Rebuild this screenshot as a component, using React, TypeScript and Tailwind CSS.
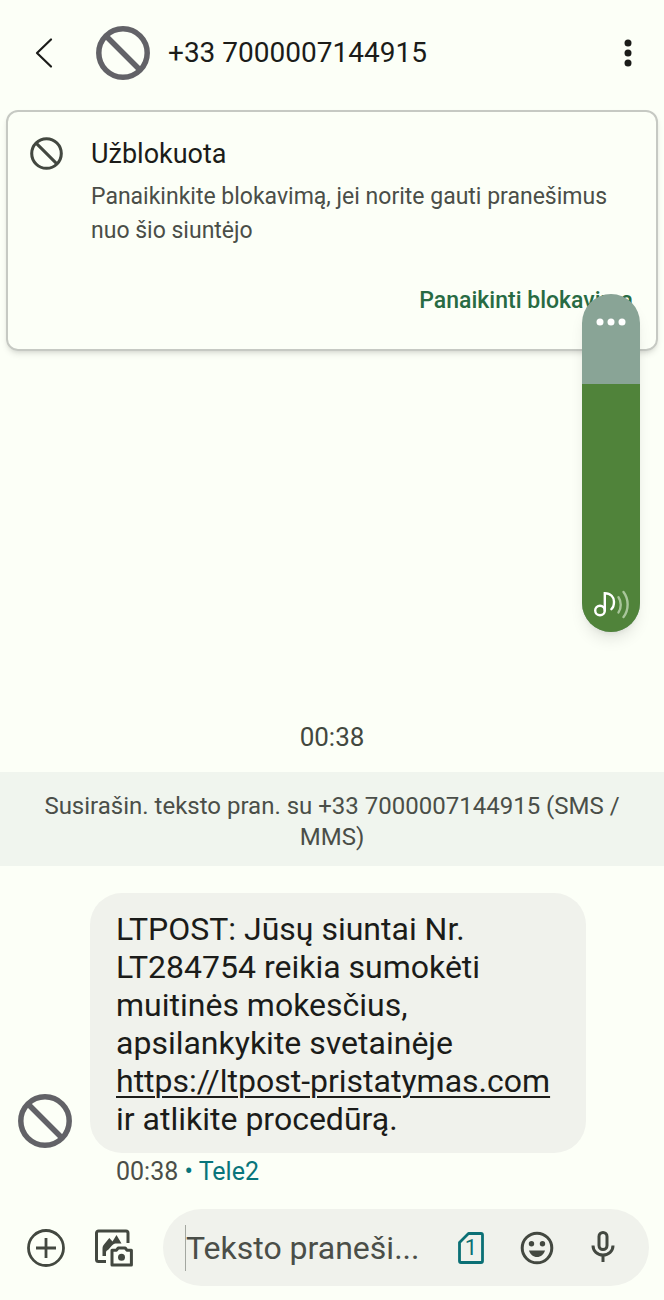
import { useState } from "react";

interface IMessage {
  lines: string[];
  link: string;
  ending: string;
  time: string;
  carrier: string;
}

const PHONE = "+33 7000007144915";

const message: IMessage = {
  lines: ["LTPOST: Jūsų siuntai Nr.", "LT284754 reikia sumokėti", "muitinės mokesčius,", "apsilankykite svetainėje"],
  link: "https://ltpost-pristatymas.com",
  ending: "ir atlikite procedūrą.",
  time: "00:38",
  carrier: "Tele2",
};

function BlockedIcon({ className, strokeWidth }: { className: string; strokeWidth: number }) {
  return (
    <svg viewBox="0 0 54 54" fill="none" stroke="currentColor" strokeWidth={strokeWidth} className={className} aria-hidden="true">
      <circle cx="27" cy="27" r="24.2" />
      <path d="M10 10l34 34" />
    </svg>
  );
}

function Header() {
  return (
    <header className="flex h-[105px] items-center pl-3 pr-1">
      <button aria-label="Atgal" className="flex size-16 items-center justify-center">
        <svg viewBox="0 0 18 32" fill="none" stroke="currentColor" strokeWidth="2.2" strokeLinecap="round" strokeLinejoin="round" className="h-8 w-[18px]">
          <path d="M16 2.5L2 16l14 13.5" />
        </svg>
      </button>
      <BlockedIcon className="ml-5 size-[54px] shrink-0 text-[#626267]" strokeWidth={5.5} />
      <h1 className="ml-[18px] flex-1 text-[28px] leading-9">{PHONE}</h1>
      <button aria-label="Daugiau parinkčių" className="flex size-16 items-center justify-center">
        <svg viewBox="0 0 8 28" fill="currentColor" className="h-7 w-2">
          <circle cx="4" cy="4" r="3.5" />
          <circle cx="4" cy="14" r="3.5" />
          <circle cx="4" cy="24" r="3.5" />
        </svg>
      </button>
    </header>
  );
}

function BlockedCard() {
  return (
    <section className="mx-[6px] mt-[5px] flex gap-7 rounded-xl border-2 border-[#c6c9c3] pb-[31px] pl-[22px] pr-[23px] pt-6 shadow-md">
      <BlockedIcon className="mt-[1px] size-[33px] shrink-0 text-[#434840]" strokeWidth={5} />
      <div className="flex flex-1 flex-col">
        <h2 className="text-[27px] leading-9">Užblokuota</h2>
        <p className="mt-2 text-[23px] leading-[34px] text-[#4a4e48]">
          Panaikinkite blokavimą, jei norite gauti pranešimus nuo šio siuntėjo
        </p>
        <button className="mt-9 self-end text-[23px] font-medium leading-[34px] text-[#286b43]">Panaikinti blokavimą</button>
      </div>
    </section>
  );
}

function VolumePanel() {
  const [volume, setVolume] = useState(73);

  return (
    <div className="absolute right-6 top-[294px] flex h-[338px] w-[58px] flex-col justify-end overflow-hidden rounded-full bg-[#89a496] shadow-lg">
      <div className="bg-[#50833a]" style={{ height: `${volume + 0.4}%` }} />
      <input
        type="range"
        aria-label="Garsumas"
        value={volume}
        onChange={(e) => setVolume(Number(e.target.value))}
        className="absolute inset-0 h-full w-full opacity-0 [direction:rtl] [writing-mode:vertical-lr]"
      />
      <button aria-label="Garso nustatymai" className="absolute left-0 top-0 flex h-14 w-full items-center justify-center">
        <svg viewBox="0 0 30 8" fill="white" className="h-2 w-[30px]">
          <circle cx="4" cy="4" r="3.5" />
          <circle cx="15" cy="4" r="3.5" />
          <circle cx="26" cy="4" r="3.5" />
        </svg>
      </button>
      <svg viewBox="0 0 36 30" fill="none" strokeWidth="2.4" strokeLinecap="round" className="pointer-events-none absolute bottom-3 left-3 h-[30px] w-9">
        <g stroke="white">
          <circle cx="6" cy="20.5" r="4.8" />
          <path d="M10.8 20.5V3.2c6 0 9.2 4 9.2 8.6 0 3.4-1 6-2.6 7.4" />
        </g>
        <path d="M24.5 7.2c3 4.2 3 11 0 15.2" stroke="#a9c69b" />
        <path d="M29.500 2c5.500 7 5.500 18 0 25" stroke="#a9c69b" />
      </svg>
    </div>
  );
}

function Bubble() {
  return (
    <div className="mt-[27px] flex items-end gap-[18px] pl-[18px]">
      <BlockedIcon className="mb-[39px] size-[54px] shrink-0 text-[#626267]" strokeWidth={5.5} />
      <div>
        <p className="rounded-[32px] bg-[#f0f2ec] pb-[15px] pl-[26px] pr-9 pt-[17px] text-[32px] leading-[38px]">
          {message.lines.map((line) => (
            <span key={line} className="block">{line}</span>
          ))}
          <a href={message.link} className="block underline decoration-2 underline-offset-4">{message.link}</a>
          <span className="block">{message.ending}</span>
        </p>
        <p className="mt-1 pl-[26px] text-[25px] leading-[30px] text-[#4a4e48]">
          {message.time} <span className="text-[#08757b]">• {message.carrier}</span>
        </p>
      </div>
    </div>
  );
}

function Composer() {
  return (
    <footer className="mt-[22px] flex items-center pb-[14px] pl-[13px] pr-[15px] text-[#434840]">
      <button aria-label="Pridėti" className="flex h-[66px] w-[66px] items-center justify-center">
        <svg viewBox="0 0 38 38" fill="none" stroke="currentColor" strokeWidth="2.8" className="size-[38px]">
          <circle cx="19" cy="19" r="17.5" />
          <path d="M19 9v20M9 19h20" />
        </svg>
      </button>
      <button aria-label="Galerija" className="ml-[2px] flex h-[66px] w-[66px] items-center justify-center">
        <svg viewBox="0 0 40 40" fill="none" stroke="currentColor" strokeWidth="3" strokeLinejoin="round" className="size-10">
          <path d="M12 33.5H4.500a2 2 0 0 1-2-2V5a2 2 0 0 1 2-2H32a2 2 0 0 1 2 2v10" />
          <path d="M8.500 28v-7c0-2 .5-3.500 1.700-4.700L15.300 10l3.200 3.500L22.500 7l5 8.500h-6c-1.500 0-2.500 1-4 2.500l-3 3.500c-1.500 1-2.500 1.500-2.500 3V28z" fill="currentColor" stroke="none" />
          <path d="M18 22.200h4.500l1.700-2.200h7l1.700 2.200h4.500V37H18z" />
          <circle cx="27.500" cy="29.300" r="3.500" fill="currentColor" stroke="none" />
        </svg>
      </button>
      <div className="ml-4 flex h-[77px] min-w-0 flex-1 items-center rounded-full bg-[#f0f2ec] pl-[22px] pr-[13px]">
        <span className="h-[46px] w-px bg-[#a3a7a0]" />
        <input
          type="text"
          aria-label="Teksto pranešimas"
          placeholder="Teksto praneši..."
          className="h-12 min-w-0 flex-1 bg-transparent text-[32px] outline-none placeholder:text-[#4a4e48]"
        />
        <button aria-label="SIM kortelė" className="flex h-[66px] w-[66px] items-center justify-center text-[#0b7075]">
          <span className="relative flex h-8 w-[26px] items-center justify-center">
            <svg viewBox="0 0 26 32" fill="none" stroke="currentColor" strokeWidth="2.8" strokeLinejoin="round" className="absolute inset-0 h-8 w-[26px]">
              <path d="M10.5 1.5H23A1.5 1.5 0 0 1 24.500 3v26a1.5 1.5 0 0 1-1.5 1.5H3A1.5 1.5 0 0 1 1.5 29V10.500z" />
            </svg>
            <span className="text-[22px] leading-8">1</span>
          </span>
        </button>
        <button aria-label="Jaustukai" className="flex h-[66px] w-[66px] items-center justify-center">
          <svg viewBox="0 0 34 34" fill="currentColor" className="size-[34px]">
            <circle cx="17" cy="17" r="14.8" fill="none" stroke="currentColor" strokeWidth="3" />
            <circle cx="11.5" cy="12.8" r="2.7" />
            <circle cx="22.5" cy="12.8" r="2.7" />
            <path d="M9 19.5h16c-1.2 4-4.2 6.5-8 6.5s-6.8-2.5-8-6.5z" />
          </svg>
        </button>
        <button aria-label="Balso įrašas" className="flex h-[66px] w-[66px] items-center justify-center">
          <svg viewBox="0 0 24 34" fill="none" stroke="currentColor" strokeWidth="3" className="mb-1 h-[34px] w-6">
            <rect x="8" y="3.5" width="8" height="17" rx="4" />
            <path d="M2 16.500c0 5.500 4.400 9.500 10 9.500s10-4 10-9.500M12 26v7" />
          </svg>
        </button>
      </div>
    </footer>
  );
}

export default function App() {
  return (
    <div className="relative flex min-h-screen flex-col bg-[#fcfff7] font-[Roboto,sans-serif] text-[#1b1c19]">
      <Header />
      <BlockedCard />
      <main className="mt-auto">
        <p className="text-center text-[26px] leading-[30px] text-[#434840]">{message.time}</p>
        <p className="mt-5 bg-[#f0f5ee] px-10 pb-[13px] pt-[19px] text-center text-[24px] leading-[31px] text-[#4a4e48]">
          {`Susirašin. teksto pran. su ${PHONE} (SMS / MMS)`}
        </p>
        <Bubble />
      </main>
      <Composer />
      <VolumePanel />
    </div>
  );
}
